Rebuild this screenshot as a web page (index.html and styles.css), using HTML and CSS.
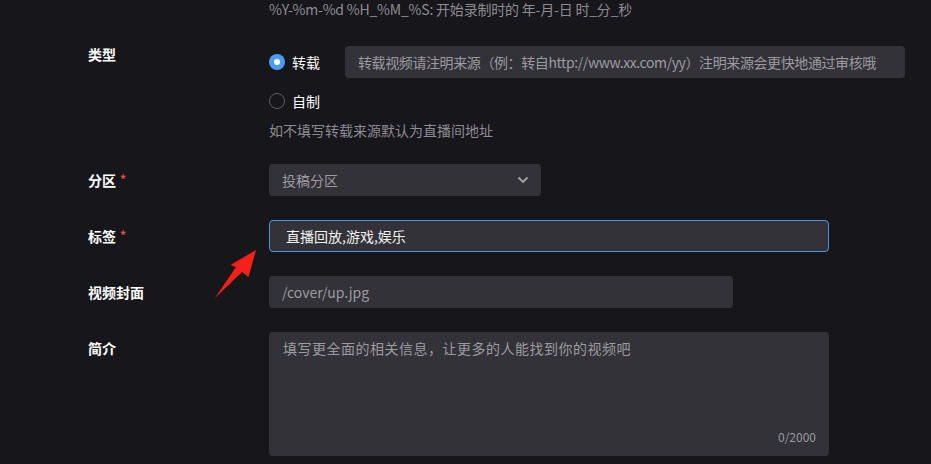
FILE: index.html
```html
<!DOCTYPE html>
<html>
<head>
    <meta charset="UTF-8">
    <meta name="viewport" content="width=device-width, initial-scale=1.0">
    <title>投稿设置</title>
    <link rel="stylesheet" href="styles.css">
</head>

<body>
<div class="form">
    <div class="hint hint__top">%Y-%m-%d %H_%M_%S: 开始录制时的 年-月-日 时_分_秒</div>

    <div class="row row__type">
        <div class="label">类型</div>
        <div class="field">
            <div class="radio__line">
                <span class="radio radio--checked"></span>
                <span class="radio__text">转载</span>
                <input class="input input--source" type="text" placeholder="转载视频请注明来源（例：转自http://www.xx.com/yy）注明来源会更快地通过审核哦">
            </div>
            <div class="radio__line radio__line--second">
                <span class="radio"></span>
                <span class="radio__text">自制</span>
            </div>
            <div class="hint">如不填写转载来源默认为直播间地址</div>
        </div>
    </div>

    <div class="row">
        <div class="label">分区<span class="star">*</span></div>
        <div class="select">
            <span>投稿分区</span>
            <svg width="12" height="8" viewBox="0 0 12 8">
                <path d="M1.5 1.5 L6 6 L10.5 1.5" fill="none" stroke="#a3a3a8" stroke-width="1.8"/>
            </svg>
        </div>
    </div>

    <div class="row">
        <div class="label">标签<span class="star">*</span></div>
        <input class="input input--tags" type="text" value="直播回放,游戏,娱乐">
    </div>

    <div class="row">
        <div class="label">视频封面</div>
        <input class="input input--cover" type="text" placeholder="/cover/up.jpg">
    </div>

    <div class="row">
        <div class="label">简介</div>
        <div class="textarea__wrap">
            <textarea class="textarea" placeholder="填写更全面的相关信息，让更多的人能找到你的视频吧"></textarea>
            <span class="counter">0/2000</span>
        </div>
    </div>
</div>

<svg class="arrow" width="60" height="60" viewBox="0 0 60 60">
    <polygon points="46,0 38.5,27 32,22 5,48 26,17 20.5,15" fill="#f6201b"/>
</svg>
</body>
</html>
```

FILE: styles.css
```css
* {
    padding: 0;
    margin: 0;
    box-sizing: border-box;
}

body {
    background-color: #17161b;
    color: #fff;
    font-family: "Noto Sans CJK SC", "Noto Sans", sans-serif;
    font-size: 14px;
    overflow: hidden;
    position: relative;
    height: 464px;
}

.form {
    padding-left: 88px;
}

.hint {
    color: #8d8c92;
    font-size: 14px;
    line-height: 20px;
    margin-top: 11px;
}

.hint__top {
    margin-top: -1px;
    margin-left: 181px;
    line-height: 20px;
    margin-bottom: 27px;
    letter-spacing: -0.2px;
}

.row {
    display: flex;
    margin-bottom: 24px;
}

.label {
    flex: none;
    width: 181px;
    font-weight: bold;
    line-height: 32px;
    display: flex;
    align-items: center;
    height: 32px;
}

.row__type .label {
    height: 16px;
    line-height: 16px;
}

.star {
    color: #ef4a40;
    font-size: 12px;
    margin-left: 4px;
    margin-top: -3px;
}

.field {
    display: flex;
    flex-direction: column;
}

.radio__line {
    display: flex;
    align-items: center;
    height: 32px;
}

.radio__line--second {
    height: 16px;
    margin-top: 15px;
}

.radio {
    width: 16px;
    height: 16px;
    border-radius: 50%;
    border: 1px solid #5e5d63;
    margin-right: 7px;
    position: relative;
}

.radio--checked {
    border: none;
    background-color: #4b9cf5;
}

.radio--checked::after {
    content: '';
    position: absolute;
    top: 5px;
    left: 5px;
    width: 6px;
    height: 6px;
    border-radius: 50%;
    background-color: #fff;
}

.radio__text {
    color: #fff;
    line-height: 16px;
}

.input {
    height: 32px;
    border: none;
    outline: none;
    border-radius: 4px;
    background-color: #333238;
    color: #f2f2f2;
    font-family: inherit;
    font-size: 14px;
    padding: 0 13px;
}

.input::placeholder,
.textarea::placeholder {
    color: #9c9ba1;
    opacity: 1;
}

.input--source {
    width: 560px;
    margin-left: 25px;
    letter-spacing: -0.4px;
}

.input--tags {
    width: 560px;
    border: 1px solid #4a94e8;
    padding-left: 16px;
}

.input--cover {
    width: 464px;
}

.select {
    width: 272px;
    height: 32px;
    border-radius: 4px;
    background-color: #333238;
    color: #9c9ba1;
    display: flex;
    align-items: center;
    justify-content: space-between;
    padding: 0 12px 0 13px;
}

.textarea__wrap {
    position: relative;
    width: 560px;
    height: 124px;
}

.textarea {
    display: block;
    width: 100%;
    height: 100%;
    resize: none;
    border: none;
    outline: none;
    border-radius: 4px;
    background-color: #333238;
    color: #f2f2f2;
    font-family: inherit;
    font-size: 14px;
    line-height: 20px;
    letter-spacing: 0.5px;
    padding: 6px 14px;
}

.counter {
    position: absolute;
    right: 13px;
    bottom: 11px;
    font-size: 12px;
    line-height: 16px;
    color: #9c9ba1;
}

.arrow {
    position: absolute;
    left: 210px;
    top: 250px;
}
```
